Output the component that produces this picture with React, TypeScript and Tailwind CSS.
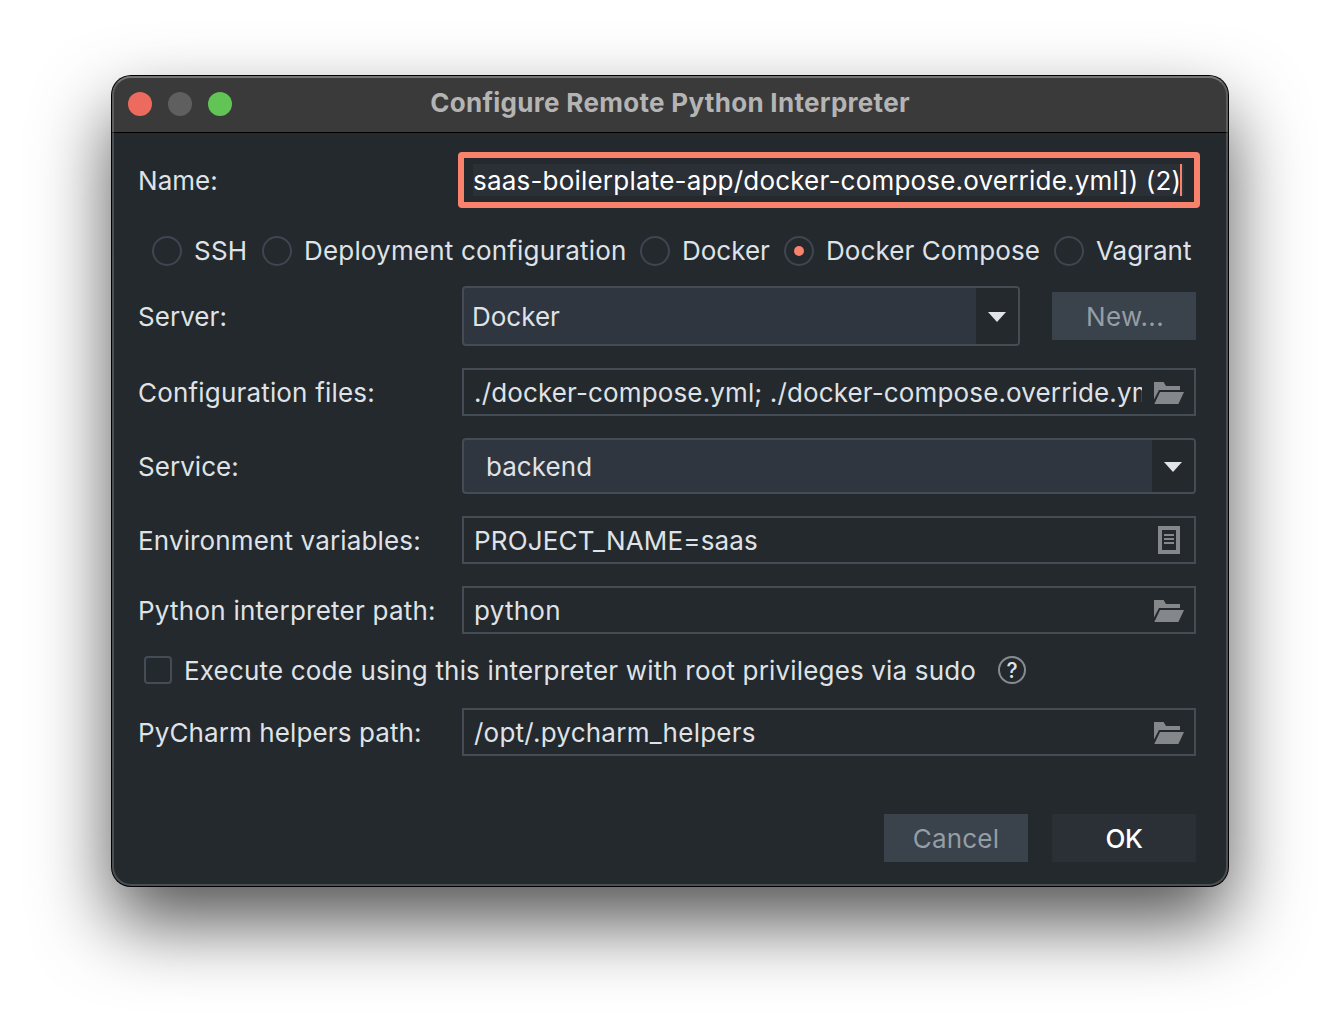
import type { ReactNode } from 'react';

const FolderIcon = () => (
  <svg width="30" height="22" viewBox="0 0 30 22" fill="#85888b" className="mt-0.5 shrink-0">
    <path d="M0 0H9.6L12 4H26V8H5L0 17.6Z" />
    <path d="M6 10H30L24.4 22H0.3Z" />
  </svg>
);

const DocumentIcon = () => (
  <svg width="22" height="28" viewBox="0 0 22 28" fill="#85888b" className="mr-1 shrink-0">
    <path fillRule="evenodd" d="M0 0H22V28H0ZM4 4V24H18V4Z" />
    <path d="M6 8H16V10H6ZM6 12H16V14H6ZM6 16H16V18H6Z" />
  </svg>
);

const Row = ({ label, className, labelClass = 'tracking-[0.05px]', children }: {
  label: string;
  className: string;
  labelClass?: string;
  children: ReactNode;
}) => (
  <div className={`flex items-center ${className}`}>
    <label className={`w-[324px] shrink-0 pt-0.5 ${labelClass}`}>{label}</label>
    {children}
  </div>
);

const TextField = ({ value, valueClass = 'tracking-[0.2px]', icon }: {
  value: string;
  valueClass?: string;
  icon: ReactNode;
}) => (
  <div className="flex h-12 w-[734px] items-center justify-between border-2 border-[#444c56] pl-[9px] pr-2.5">
    <span className={`w-[669px] overflow-hidden pl-px pt-0.5 ${valueClass}`}>{value}</span>
    {icon}
  </div>
);

const Combo = ({ value, className, valueClass }: { value: string; className: string; valueClass: string }) => (
  <div className={`flex overflow-hidden rounded-[4px] border-2 border-[#444c56] bg-[#2f363f] ${className}`}>
    <span className={`flex flex-1 items-center pt-0.5 ${valueClass}`}>{value}</span>
    <span className="flex w-[42px] items-center justify-center bg-[#24292e] pt-0.5">
      <svg width="18" height="10" viewBox="0 0 18 10" fill="#e1e4e8">
        <path d="M0 0H18L9 10Z" />
      </svg>
    </span>
  </div>
);

const Radio = ({ label, className, checked = false }: { label: string; className: string; checked?: boolean }) => (
  <div className={`flex h-[30px] items-start gap-3 ${className}`}>
    <span className="flex size-[30px] shrink-0 items-center justify-center rounded-full border-2 border-[#3f4651]">
      {checked && <span className="size-2.5 rounded-full bg-[#f9826c]" />}
    </span>
    <span className="leading-[30px]">{label}</span>
  </div>
);

export default function App() {
  return (
    <div className="h-[1034px] w-[1340px] overflow-hidden bg-white pt-[76px]">
      <div className="relative mx-auto h-[810px] w-[1116px] whitespace-nowrap rounded-[19px] bg-[#24292e] font-['Inter',sans-serif] text-[26px] leading-8 text-[#dfe2e6] shadow-[0_0_0_1px_#000,0_36px_76px_rgba(0,0,0,0.68)]">
        <div className="relative flex h-[57px] justify-center rounded-t-[19px] border-b border-black bg-[#3a3a3a] pt-[11px]">
          <div className="absolute left-4 top-4 flex gap-4">
            <span className="size-6 rounded-full bg-[#ed6a5f]" />
            <span className="size-6 rounded-full bg-[#5f5f5f]" />
            <span className="size-6 rounded-full bg-[#61c455]" />
          </div>
          <h1 className="font-bold tracking-[0.3px] text-[#b4b4b4]">Configure Remote Python Interpreter</h1>
        </div>

        <div className="pl-[26px] pr-[30px] pt-[19px]">
          <Row label="Name:" className="h-14">
            <div className="-ml-1 flex h-14 w-[742px] shrink-0 items-center rounded-[4px] border-[6px] border-[#f9826c] pl-[9px]">
              <div className="flex h-8 w-[711px] bg-[#2b2f36] text-white">
                <span className="w-[707px] pt-px tracking-[0.2px]">saas-boilerplate-app/docker-compose.override.yml]) (2)</span>
                <span className="h-8 w-0.5 bg-[#f9826c]" />
              </div>
            </div>
          </Row>

          <div className="ml-3.5 mt-7 flex">
            <Radio label="SSH" className="w-[110px] tracking-[0.2px]" />
            <Radio label="Deployment configuration" className="w-[378px] tracking-[0.18px]" />
            <Radio label="Docker" className="w-[144px]" />
            <Radio label="Docker Compose" className="w-[270px] tracking-[0.08px]" checked />
            <Radio label="Vagrant" className="w-[137px]" />
          </div>

          <Row label="Server:" className="mt-5">
            <Combo value="Docker" className="h-[60px] w-[558px]" valueClass="pl-2" />
            <button className="ml-8 h-12 w-36 bg-[#3a424c] pl-0.5 pt-0.5 tracking-[0.3px] text-[#959da5]">New...</button>
          </Row>
          <Row label="Configuration files:" className="mt-[22px]" labelClass="tracking-[0.18px]">
            <TextField
              value="./docker-compose.yml; ./docker-compose.override.yml"
              valueClass="tracking-[0.14px]"
              icon={<FolderIcon />}
            />
          </Row>
          <Row label="Service:" className="mt-[22px]">
            <Combo value="backend" className="h-14 w-[734px]" valueClass="pl-[22px] tracking-[0.05px]" />
          </Row>
          <Row label="Environment variables:" className="mt-[22px]" labelClass="tracking-[0.14px]">
            <TextField value="PROJECT_NAME=saas" valueClass="tracking-[0.16px]" icon={<DocumentIcon />} />
          </Row>
          <Row label="Python interpreter path:" className="mt-[22px]" labelClass="tracking-[0.24px]">
            <TextField value="python" valueClass="tracking-[0.25px]" icon={<FolderIcon />} />
          </Row>

          <div className="mt-[22px] flex h-7 items-center">
            <span className="ml-1.5 size-7 rounded-[4px] border-2 border-[#444c56]" />
            <span className="ml-3 w-[814px] pt-0.5 tracking-[0.17px]">
              Execute code using this interpreter with root privileges via sudo
            </span>
            <span className="flex size-7 items-center justify-center rounded-full border-2 border-[#868b90] pt-px text-[21px] font-medium leading-6">
              ?
            </span>
          </div>

          <Row label="PyCharm helpers path:" className="mt-6" labelClass="tracking-[0.11px]">
            <TextField value="/opt/.pycharm_helpers" valueClass="tracking-[0.24px]" icon={<FolderIcon />} />
          </Row>

          <div className="mr-0.5 mt-[58px] flex justify-end gap-6">
            <button className="h-12 w-36 bg-[#3a424c] pt-0.5 tracking-[0.2px] text-[#959da5]">Cancel</button>
            <button className="h-12 w-36 bg-[#2b2f36] pt-0.5 font-medium tracking-[-0.3px] text-white">OK</button>
          </div>
        </div>

        <div className="pointer-events-none absolute inset-0 rounded-[19px] border-2 border-white/18 border-t-white/30" />
      </div>
    </div>
  );
}
